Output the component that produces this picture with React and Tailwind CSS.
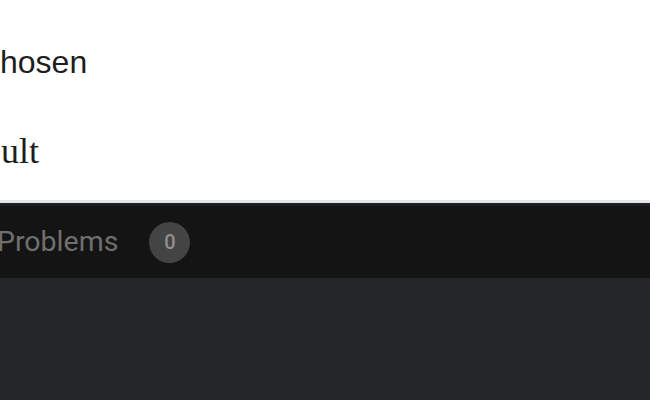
export default function App() {
  return (
    <div className="flex h-[400px] w-[650px] flex-col overflow-hidden bg-white">
      {/* editor text, cut at left edge */}
      <div className="h-[200px] shrink-0 bg-white pt-[46px] text-[#1e1e1e]">
        <div className="h-[32px] whitespace-nowrap text-[32px] leading-none font-['Liberation_Sans',Arial,sans-serif]">
          hosen
        </div>
        <div className="mt-[55px] h-[36px] whitespace-nowrap pl-[1px] text-[36px] leading-none font-['Liberation_Serif','Times_New_Roman',serif]">
          ult
        </div>
      </div>
      <div className="h-[3px] shrink-0 bg-[#e6e6e6]" />
      <div className="h-[3px] shrink-0 bg-[#1d2023]" />

      {/* panel tab bar */}
      <div className="flex h-[72px] shrink-0 items-center bg-[#141414] font-['Roboto',sans-serif]">
        <span className="-ml-[3px] text-[28.5px] leading-none text-[#6f6f6f]">Problems</span>
        <span className="ml-[31px] flex h-[41px] w-[41px] items-center justify-center rounded-full bg-[#444444] text-[20px] font-medium leading-none text-[#8f8f8f]">
          0
        </span>
      </div>

      <div className="flex-1 bg-[#24272a]" />
    </div>
  );
}
